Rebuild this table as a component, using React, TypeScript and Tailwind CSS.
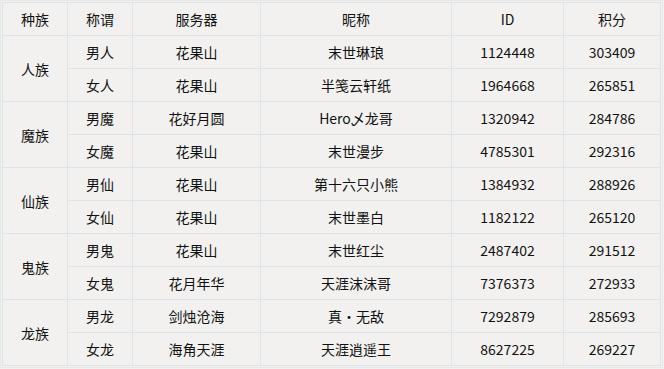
import React from "react";

const rows = [
	{
		race: "人族",
		items: [
			["男人", "花果山", "末世琳琅", "1124448", "303409"],
			["女人", "花果山", "半笺云轩纸", "1964668", "265851"],
		],
	},
	{
		race: "魔族",
		items: [
			["男魔", "花好月圆", "Hero乄龙哥", "1320942", "284786"],
			["女魔", "花果山", "末世漫步", "4785301", "292316"],
		],
	},
	{
		race: "仙族",
		items: [
			["男仙", "花果山", "第十六只小熊", "1384932", "288926"],
			["女仙", "花果山", "末世墨白", "1182122", "265120"],
		],
	},
	{
		race: "鬼族",
		items: [
			["男鬼", "花果山", "末世红尘", "2487402", "291512"],
			["女鬼", "花月年华", "天涯沫沫哥", "7376373", "272933"],
		],
	},
	{
		race: "龙族",
		items: [
			["男龙", "剑烛沧海", "真·无敌", "7292879", "285693"],
			["女龙", "海角天涯", "天涯逍遥王", "8627225", "269227"],
		],
	},
];

const headers = ["种族", "称谓", "服务器", "昵称", "ID", "积分"];

const cell = "flex items-center justify-center border-r border-b border-[#dde3e6]";

const App = () => {
	return (
		<div className="w-[664px] h-[369px] bg-[#f2f1ef] text-[#111] text-[14px] leading-none font-['Noto_Sans_CJK_SC',sans-serif]">
			<div className="w-[663px] h-[368px] border border-[#e6e9ea] p-px">
				<div className="grid grid-cols-[65px_65px_128px_191px_112px_97px] auto-rows-[33px] border-l border-t border-[#dde3e6] w-max">
					{headers.map((h) => (
						<div key={h} className={cell}>
							{h}
						</div>
					))}
					{rows.map((group) => (
						<React.Fragment key={group.race}>
							<div className={`${cell} row-span-2`}>{group.race}</div>
							{group.items[0].map((v, i) => (
								<div key={"a" + i} className={cell}>
									{v}
								</div>
							))}
							{group.items[1].map((v, i) => (
								<div key={"b" + i} className={cell}>
									{v}
								</div>
							))}
						</React.Fragment>
					))}
				</div>
			</div>
		</div>
	);
};

export default App;
